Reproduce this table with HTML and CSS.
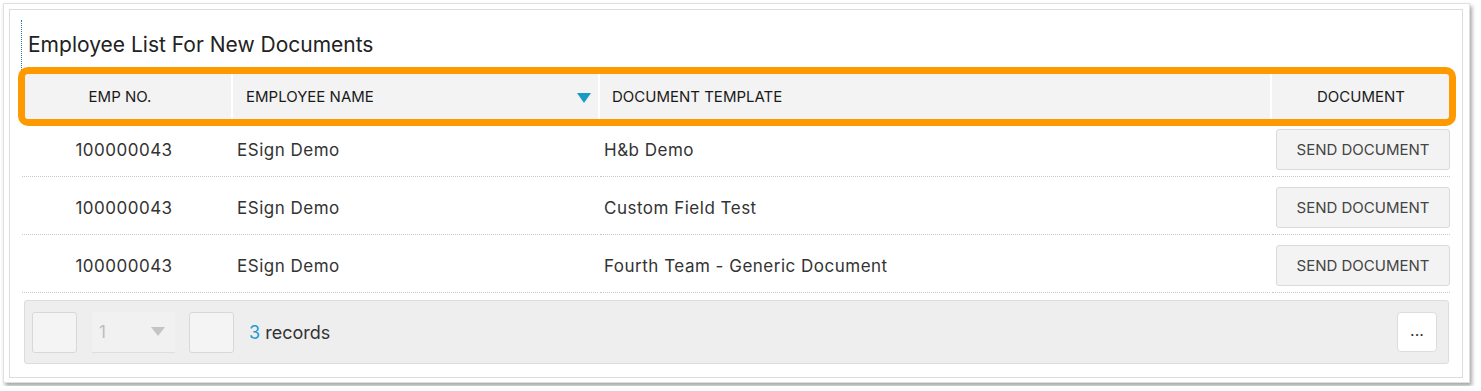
FILE: index.html
```html
<!DOCTYPE html>
<html>
<head>
<meta charset="utf-8">
<link rel="stylesheet" href="styles.css">
</head>
<body>
<div class="frame">
  <div class="card">
    <div class="title-block"><h2 class="title">Employee List For New Documents</h2></div>
    <div class="grid-head">
      <div class="hcell c1">EMP NO.</div>
      <div class="hcell c2"><span>EMPLOYEE NAME</span><span class="sort"></span></div>
      <div class="hcell c3">DOCUMENT TEMPLATE</div>
      <div class="hcell c4">DOCUMENT</div>
    </div>
    <div class="row">
      <div class="cell c1">100000043</div>
      <div class="cell c2">ESign Demo</div>
      <div class="cell c3">H&amp;b Demo</div>
      <div class="cell c4"><button class="send">SEND DOCUMENT</button></div>
    </div>
    <div class="row">
      <div class="cell c1">100000043</div>
      <div class="cell c2">ESign Demo</div>
      <div class="cell c3">Custom Field Test</div>
      <div class="cell c4"><button class="send">SEND DOCUMENT</button></div>
    </div>
    <div class="row">
      <div class="cell c1">100000043</div>
      <div class="cell c2">ESign Demo</div>
      <div class="cell c3">Fourth Team - Generic Document</div>
      <div class="cell c4"><button class="send">SEND DOCUMENT</button></div>
    </div>
    <div class="pager">
      <div class="pbox"></div>
      <div class="pselect"><span>1</span><span class="ptri"></span></div>
      <div class="pbox"></div>
      <div class="records"><span class="count">3</span> records</div>
      <div class="more">...</div>
    </div>
  </div>
</div>
</body>
</html>
```
FILE: styles.css
```css
html, body {
  margin: 0;
  padding: 0;
  background: #ffffff;
}
body {
  padding: 3px;
  font-family: Inter, "Noto Sans", sans-serif;
  color: #333;
}
.frame {
  width: 1455px;
  height: 368px;
  border: 1px solid #e0e0e0;
  padding: 5px;
  background: #fff;
  box-shadow: 2px 3px 4px rgba(0,0,0,0.35);
}
.card {
  width: 1427px;
  height: 355px;
  border: 1px solid #dcdcdc;
  padding: 0 13px 12px 12px;
  display: flex;
  flex-direction: column;
}
.title-block {
  margin-top: 10px;
  height: 54px;
  border-left: 1px dotted #2a7fa0;
  margin-left: -1px;
  padding-left: 6px;
  padding-top: 13px;
  box-sizing: border-box;
}
.title {
  margin: 0;
  font-size: 21px;
  line-height: 24px;
  font-weight: 400;
  color: #222;
}
.grid-head {
  margin-left: 3px;
  display: grid;
  grid-template-columns: 206px 365px 670px 178px;
  column-gap: 2px;
  height: 45px;
  border-radius: 3px;
  outline: 7px solid #ff9900;
  position: relative;
  z-index: 2;
}
.hcell {
  background: #f3f3f3;
  font-size: 15px;
  font-weight: 400;
  color: #1a1a1a;
  display: flex;
  align-items: center;
}
.hcell.c1 { justify-content: center; padding-right: 16px; }
.hcell.c2 { padding-left: 13px; padding-right: 7px; justify-content: space-between; }
.hcell.c3 { padding-left: 12px; }
.hcell.c4 { justify-content: center; }
.sort {
  width: 0;
  height: 0;
  border-left: 7px solid transparent;
  border-right: 7px solid transparent;
  border-top: 10px solid #1a9bc7;
  margin-top: 2px;
}
.row {
  display: grid;
  grid-template-columns: 209px 365px 670px 178px;
  column-gap: 2px;
  height: 58px;
}
.cell {
  border-bottom: 1px dotted #c8c8c8;
  font-size: 17px;
  letter-spacing: 0.5px;
  color: #333;
  display: flex;
  align-items: center;
  padding-top: 4px;
}
.cell.c1 { justify-content: center; padding-right: 5px; }
.cell.c2, .cell.c3 { padding-left: 4px; }
.cell.c4 { padding-left: 4px; letter-spacing: 0; }
.send {
  width: 174px;
  height: 41px;
  background: #f3f3f3;
  border: 1px solid #dadada;
  border-radius: 3px;
  font-family: Inter, "Noto Sans", sans-serif;
  font-size: 15px;
  color: #444;
  padding: 0;
}
.pager {
  margin-top: 7px;
  margin-left: 2px;
  height: 62px;
  background: #eeeeee;
  border: 1px solid #dcdcdc;
  border-radius: 3px;
  display: flex;
  align-items: center;
  padding: 0 11px 0 7px;
}
.pbox {
  width: 43px;
  height: 39px;
  background: #f4f4f4;
  border: 1px solid #d8d8d8;
  border-radius: 3px;
  margin-right: 15px;
}
.pselect {
  width: 83px;
  height: 41px;
  background: #f1f1f1;
  border-bottom: 1px solid #dedede;
  border-radius: 3px 3px 0 0;
  box-sizing: border-box;
  margin-right: 14px;
  display: flex;
  align-items: center;
  justify-content: space-between;
  padding: 0 10px 0 7px;
  font-size: 17px;
  color: #bdbdbd;
}
.ptri {
  width: 0;
  height: 0;
  border-left: 7px solid transparent;
  border-right: 7px solid transparent;
  border-top: 9px solid #c4c4c4;
}
.records {
  font-size: 18px;
  color: #333;
  flex: 1;
}
.count { color: #1e9ad0; }
.more {
  width: 40px;
  height: 40px;
  background: #fff;
  border: 1px solid #dcdcdc;
  border-radius: 4px;
  display: flex;
  align-items: center;
  justify-content: center;
  font-size: 16px;
  color: #333;
  line-height: 1;
  padding-bottom: 4px;
  box-sizing: border-box;
}
```
